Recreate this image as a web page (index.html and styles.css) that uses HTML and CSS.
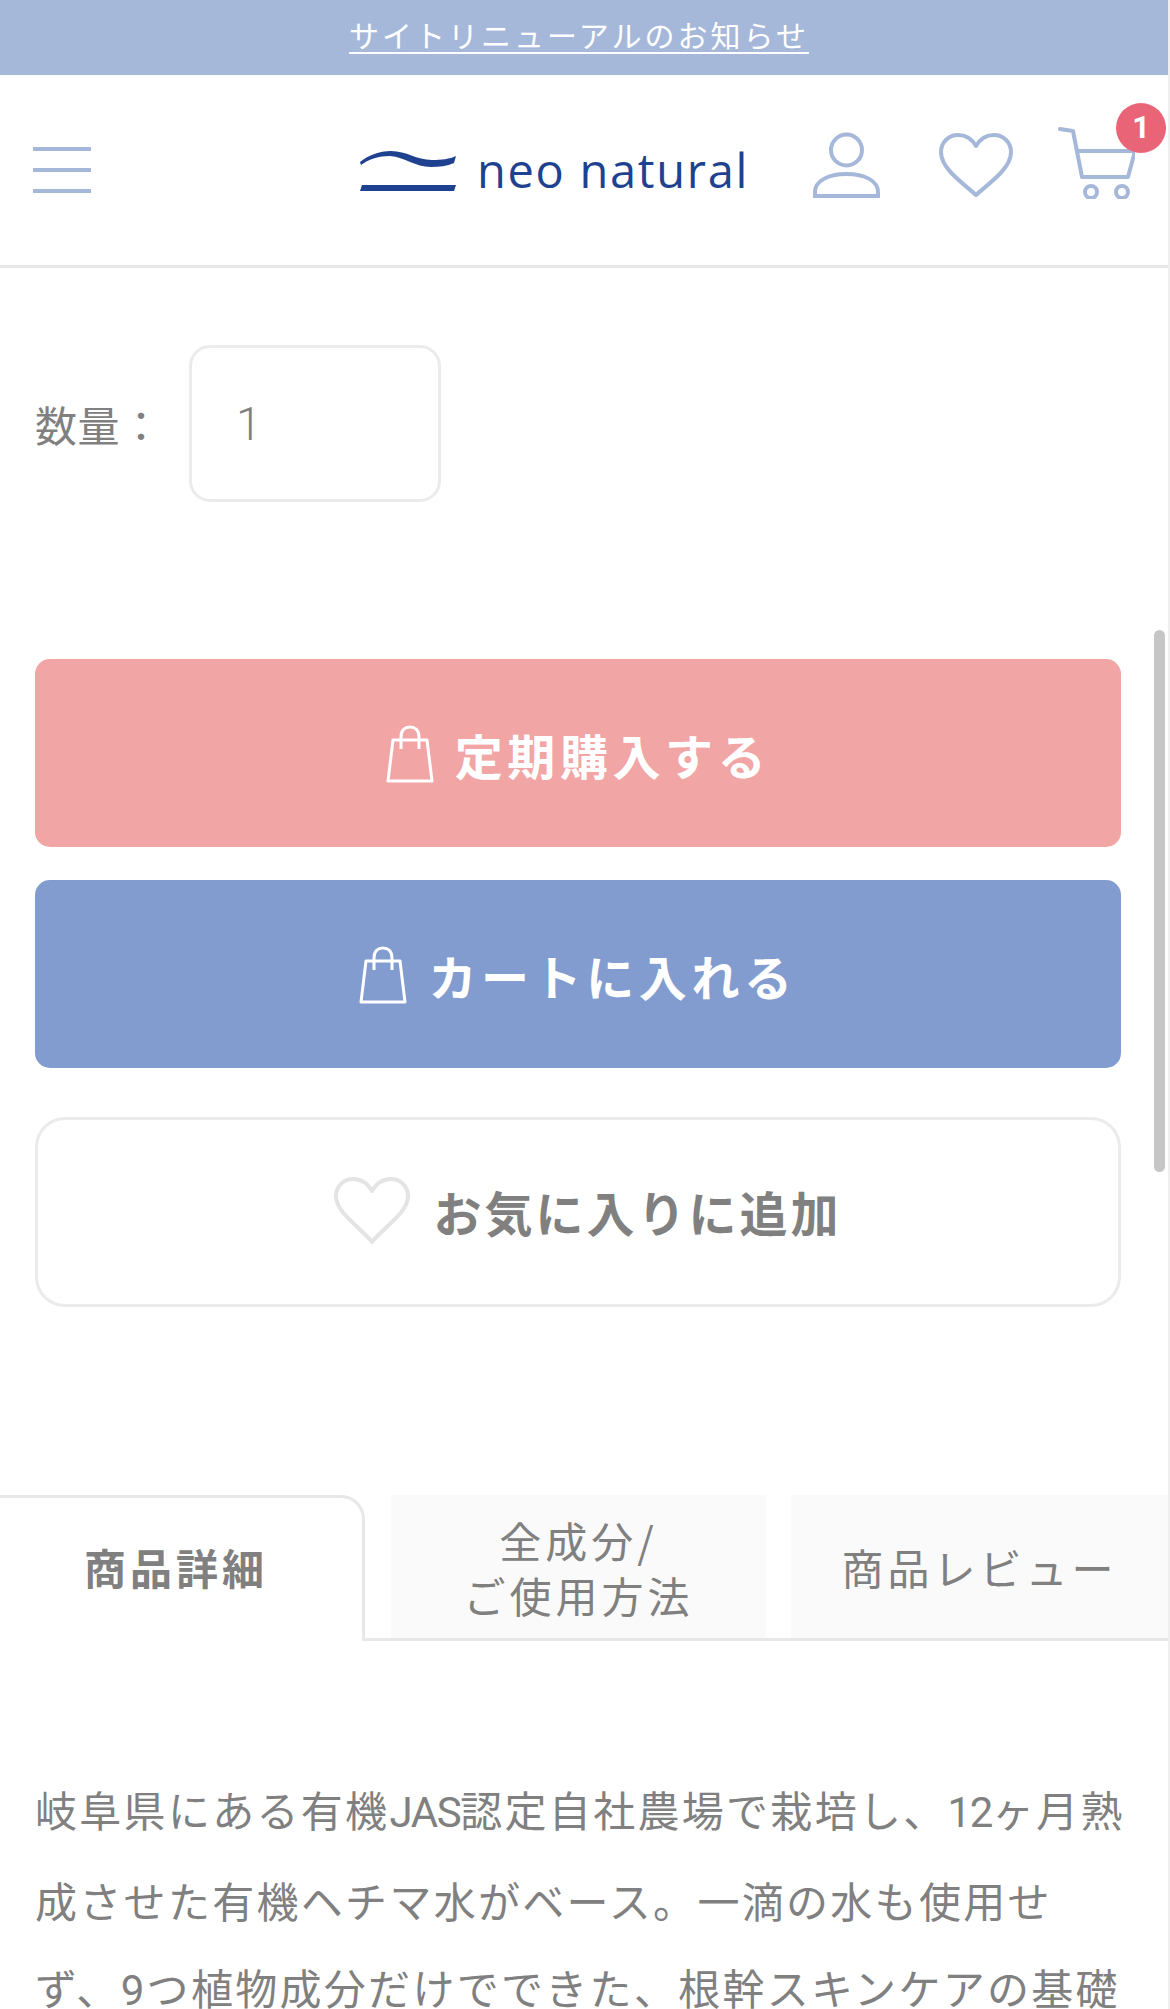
FILE: index.html
```html
<!DOCTYPE html>
<html lang="ja">
<head>
<meta charset="utf-8">
<title>neo natural</title>
<link rel="stylesheet" href="styles.css">
</head>
<body>
<div class="page">
  <div class="banner"><a class="banner-link" href="#">サイトリニューアルのお知らせ</a></div>
  <header class="header">
    <button class="menu" aria-label="menu"><span></span><span></span><span></span></button>
    <a class="logo" href="#">
      <svg class="wave" viewBox="0 0 96 41" width="96" height="41">
        <path d="M0 12C9 5 19 1 31 1C47 1 56 10 72 10C81 10 90 9 96 6L94 13C87 16 79 17 71 17C55 17 45 7 30 6C19 6 9 9 1 15Z" fill="#1f4290"/>
        <path d="M2 35H96L94 41H0Z" fill="#1f4290"/>
      </svg>
      <span class="logo-text">neo natural</span>
    </a>
    <div class="icons">
      <svg class="ic-user" viewBox="0 0 67 66" width="67" height="66" fill="none" stroke="#a6b8da" stroke-width="4">
        <circle cx="33.500" cy="18" r="15.500"/>
        <path d="M2 64V60C2 49 15 42 33.500 42C52 42 65 49 65 60V64Z"/>
      </svg>
      <svg class="ic-heart" viewBox="0 0 74 65" width="74" height="65" fill="none" stroke="#a6b8da" stroke-width="4" stroke-linejoin="round">
        <path d="M37 62C24 50 2 36 2 19C2 9 10 2 19 2C27 2 33 6 37 13C41 6 47 2 55 2C64 2 72 9 72 19C72 36 50 50 37 62Z"/>
      </svg>
      <span class="cart">
        <svg viewBox="0 0 77 72" width="77" height="72" fill="none" stroke="#a6b8da" stroke-width="4" stroke-linejoin="round" stroke-linecap="round">
          <path d="M2 2L15 4L24 50H70L77 24H19"/>
          <circle cx="33" cy="65" r="6"/>
          <circle cx="64" cy="65" r="6"/>
        </svg>
        <span class="badge">1</span>
      </span>
    </div>
  </header>

  <main class="main">
    <div class="qty">
      <label class="qty-label" for="qty">数量：</label>
      <input class="qty-input" id="qty" value="1" readonly>
    </div>

    <div class="actions">
      <a class="btn btn-pink" href="#">
        <svg class="bag" viewBox="0 0 48 58" width="48" height="58" fill="none" stroke="#fff" stroke-width="3">
          <path d="M7 15H41L46 56H2Z" stroke-linejoin="round"/>
          <path d="M15 24V12C15 5 19 2 24 2C29 2 33 5 33 12V24"/>
        </svg>
        定期購入する
      </a>
      <a class="btn btn-blue" href="#">
        <svg class="bag" viewBox="0 0 48 58" width="48" height="58" fill="none" stroke="#fff" stroke-width="3">
          <path d="M7 15H41L46 56H2Z" stroke-linejoin="round"/>
          <path d="M15 24V12C15 5 19 2 24 2C29 2 33 5 33 12V24"/>
        </svg>
        カートに入れる
      </a>
      <a class="btn btn-outline" href="#">
        <svg class="fav" viewBox="0 0 76 68" width="76" height="68" fill="none" stroke="#e4e4e4" stroke-width="4" stroke-linejoin="round">
          <path d="M38 65C26 50 2 36 2 19C2 9 10 2 19 2C28 2 34 7 38 14C42 7 48 2 57 2C66 2 74 9 74 19C74 36 50 50 38 65Z"/>
        </svg>
        お気に入りに追加
      </a>
    </div>

    <nav class="tabs">
      <a class="tab tab-active" href="#">商品詳細</a>
      <a class="tab tab-second" href="#">全成分/<br>ご使用方法</a>
      <a class="tab tab-third" href="#">商品レビュー</a>
    </nav>

    <p class="desc">岐阜県にある有機<span class="latin">JAS</span>認定自社農場で栽培し、<span class="latin">12</span>ヶ月熟<br>成させた有機ヘチマ水がベース。一滴の水も使用せ<br>ず、<span class="digit">9</span>つ植物成分だけでできた、根幹スキンケアの基礎</p>
  </main>
  <div class="scrollbar"></div>
</div>
</body>
</html>
```
FILE: styles.css
```css
* { box-sizing: border-box; }
html, body { margin: 0; padding: 0; height: 100%; overflow: hidden; background: #fff; }
body {
  font-family: "Noto Sans CJK JP", "Noto Sans", sans-serif;
  color: #808080;
}
a { text-decoration: none; color: inherit; }
.page { position: relative; height: 2009px; overflow: hidden; border-right: 2px solid #efefef; }

.banner {
  height: 75px;
  padding: 0 10px 7px 0;
  background: #a6b8da;
  display: flex;
  align-items: center;
  justify-content: center;
}
.banner-link {
  color: #fff;
  font-size: 30px;
  font-weight: 400;
  letter-spacing: 3px;
  line-height: 1.2;
  text-decoration: underline;
  text-underline-offset: 5px;
  text-decoration-thickness: 2px;
}

.header {
  height: 193px;
  border-bottom: 3px solid #e8e8e8;
  display: flex;
  align-items: center;
  padding-left: 33px;
}
.menu {
  width: 58px;
  display: flex;
  flex-direction: column;
  gap: 17px;
  padding: 0;
  border: 0;
  background: none;
}
.menu span { display: block; height: 4px; background: #a6b8da; }
.logo { display: flex; align-items: center; gap: 21px; margin-left: 269px; }
.wave { display: block; }
.logo-text {
  font-family: "Open Sans", sans-serif;
  font-size: 47px;
  font-weight: 500;
  letter-spacing: 1.7px;
  line-height: 1;
  color: #1f4290;
}
.icons { display: flex; align-items: center; margin-left: 64px; padding-bottom: 10px; }
.ic-user, .ic-heart { display: block; }
.ic-heart { margin-left: 59px; }
.cart { position: relative; display: block; margin-left: 45px; margin-top: -4px; }
.cart svg { display: block; }
.badge {
  position: absolute;
  top: -24px;
  right: -31px;
  width: 50px;
  height: 50px;
  border-radius: 50%;
  background: #ea6478;
  color: #fff;
  font-family: "Roboto", sans-serif;
  font-size: 31px;
  font-weight: 700;
  line-height: 50px;
  text-align: center;
}

.main { padding-top: 77px; }
.qty { display: flex; align-items: center; padding-left: 35px; }
.qty-label { width: 154px; font-size: 42px; letter-spacing: 0.5px; }
.qty-input {
  width: 252px;
  height: 157px;
  border: 3px solid #ebebeb;
  border-radius: 21px;
  padding: 0 0 0 44px;
  font-family: "Roboto", sans-serif;
  font-size: 46px;
  font-weight: 300;
  color: #808080;
  background: #fff;
  outline: none;
}

.actions { display: flex; flex-direction: column; padding: 157px 47px 0 35px; }
.btn {
  height: 188px;
  padding-top: 2px;
  border-radius: 15px;
  display: flex;
  align-items: center;
  justify-content: center;
  gap: 21px;
  font-size: 48px;
  font-weight: 700;
  letter-spacing: 4.6px;
  color: #fff;
}
.btn-pink { background: #f1a5a5; }
.btn-blue { background: #829ccf; margin-top: 33px; }
.btn-outline {
  height: 190px;
  margin-top: 49px;
  padding: 0 0 2px 20px;
  gap: 23px;
  background: #fff;
  border: 3px solid #ebebeb;
  border-radius: 30px;
  color: #808080;
  letter-spacing: 3px;
}
.bag { display: block; }
.fav { display: block; }

.tabs {
  display: flex;
  margin-top: 188px;
  height: 146px;
  border-bottom: 3px solid #e8e8e8;
}
.tab {
  display: flex;
  align-items: center;
  justify-content: center;
  text-align: center;
  font-size: 42px;
  letter-spacing: 4px;
  line-height: 55px;
  background: #fafafa;
}
.tab-active {
  width: 365px;
  margin-bottom: -3px;
  padding: 0 10px 6px 0;
  background: #fff;
  font-weight: 700;
  border-top: 3px solid #e8e8e8;
  border-right: 3px solid #e8e8e8;
  border-top-right-radius: 24px;
}
.tab-second { width: 375px; margin-left: 26px; }
.tab-third { flex: 1; margin-left: 25px; }

.desc {
  margin: 124px 0 0;
  padding-left: 35px;
  font-size: 42px;
  letter-spacing: 2.3px;
  line-height: 87px;
  white-space: nowrap;
}
.latin { font-family: "Roboto", sans-serif; letter-spacing: -1.4px; }
.digit { font-family: "Roboto", sans-serif; }

.scrollbar {
  position: absolute;
  top: 630px;
  right: 3px;
  width: 11px;
  height: 542px;
  border-radius: 6px;
  background: #c6c6c6;
}
```
